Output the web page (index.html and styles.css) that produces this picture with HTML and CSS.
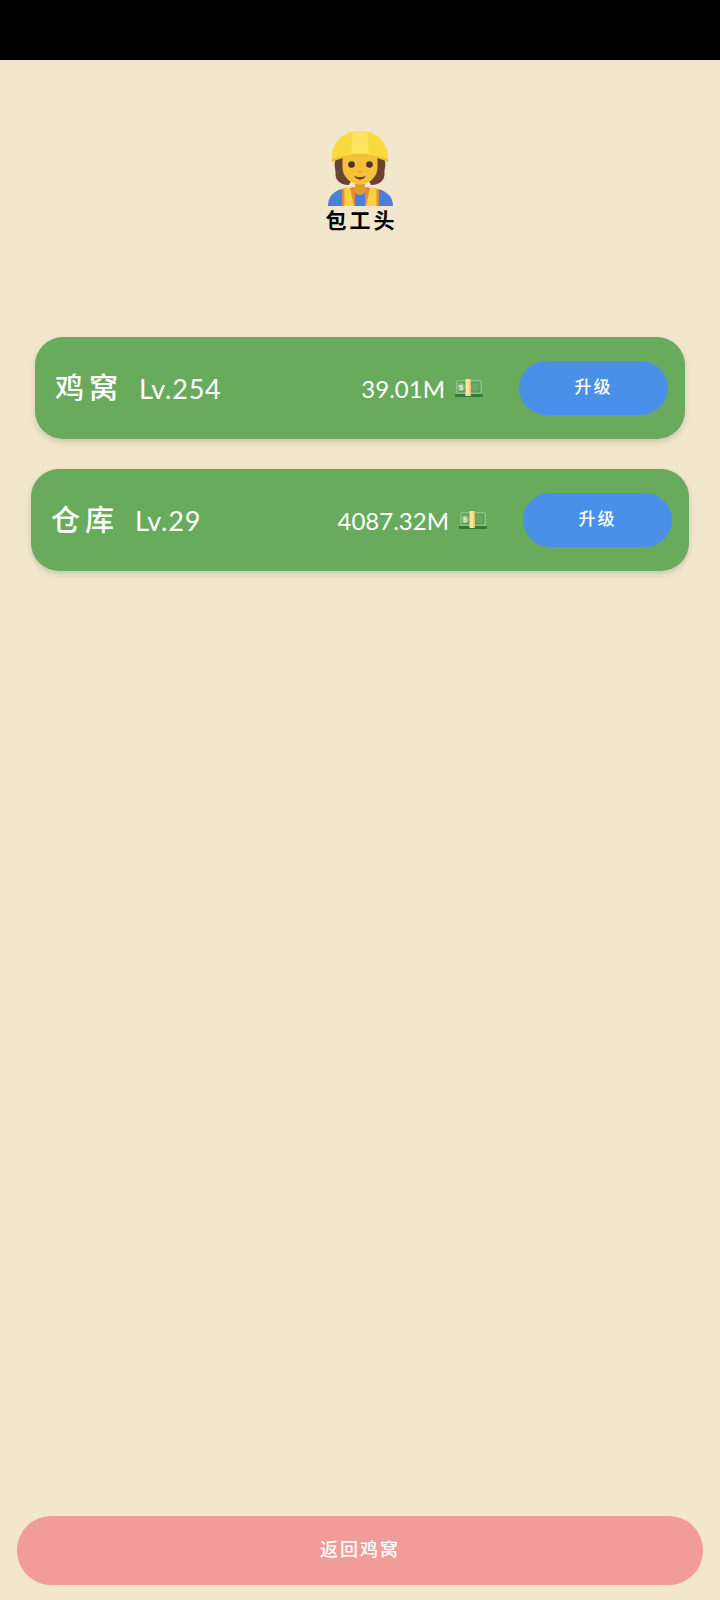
FILE: index.html
```html
<!DOCTYPE html>
<html lang="zh-CN">
<head>
    <meta charset="UTF-8">
    <meta name="viewport" content="width=device-width, initial-scale=1.0">
    <title>包工头</title>
    <link rel="stylesheet" href="styles.css">
</head>
<body>

<div class="status-bar"></div>

<div class="page">
    <div class="boss">
        <!-- 工人头像 -->
        <svg class="boss-icon" viewBox="0 0 72 76" aria-hidden="true">
            <path d="M4 76 C4 65 11 60 22 58 L50 58 C61 60 69 65 69 76 Z" fill="#4a7fdc"/>
            <path d="M12 28 C9 35 12 39 11.500 43 C11 49 15 55 25 55 L30 44 H42 L47 55 C57 55 61 49 60.500 43 C60 39 63 35 60 28 Z" fill="#6b4430"/>
            <path d="M18 76 V59 L29 57 L36 68 L43 57 L55 59 V76 Z" fill="#f7d344"/>
            <path d="M18 76 V59.500 L20.500 59 V76 Z M55 76 V59.500 L52.500 59 V76 Z" fill="#e98a35"/>
            <path d="M26 58 L30 57 L42 57 L46 58 L42 76 H30 Z" fill="#e98a35"/>
            <path d="M31 57 H41 V76 H31 Z" fill="#4a7fdc"/>
            <path d="M31 48 H41 V62 C39 66 33 66 31 62 Z" fill="#e0a02c"/>
            <path d="M18.500 24 H53.500 V37 C53.500 48 44 54.500 36 54.500 C28 54.500 18.500 48 18.500 37 Z" fill="#f6c13a"/>
            <circle cx="27.500" cy="34.500" r="3.300" fill="#4b3426"/>
            <circle cx="45.500" cy="34.500" r="3.300" fill="#4b3426"/>
            <path d="M30 45.500 C33 47.500 39 47.500 42 45.500 C40 51 32 51 30 45.500 Z" fill="#6d3f26"/>
            <path d="M34 41 C35.500 42 36.500 42 38 41" fill="none" stroke="#e39a28" stroke-width="1.400"/>
            <path d="M8 32 C6 12 20 1 36 1 C52 1 66 12 64 32 C50 24 22 24 8 32 Z" fill="#f9d93e"/>
            <path d="M29 2 C31 0.500 41 0.500 43 2 L45 23.500 C40 23 32 23 27 23.500 Z" fill="#fde45f"/>
            <path d="M8 32 C22 24 50 24 64 32 L64 30 C50 22.500 22 22.500 8 30 Z" fill="#e8bd2c"/>
        </svg>
        <div class="boss-name">包工头</div>
    </div>

    <div class="card card-coop">
        <span class="card-name">鸡窝</span>
        <span class="card-level">Lv.254</span>
        <span class="card-cost">39.01M</span>
        <svg class="money-icon" viewBox="0 0 28 18" aria-hidden="true">
            <rect x="0" y="15" width="28" height="3" rx="1" fill="#2f7a35"/>
            <rect x="1" y="1" width="26" height="14" rx="1.500" fill="#8cc084"/>
            <rect x="2.500" y="2.500" width="23" height="11" fill="#5d9e58"/>
            <circle cx="6" cy="8" r="4" fill="#82ba7a"/>
            <text class="money-sign" x="6" y="11">$</text>
            <circle cx="20" cy="8" r="4" fill="#6aa964"/>
            <rect x="10.500" y="0" width="5" height="17" fill="#f8e3a0"/>
            <rect x="14.500" y="0" width="1.500" height="17" fill="#e7bf63"/>
        </svg>
        <button class="btn-upgrade">升级</button>
    </div>

    <div class="card card-store">
        <span class="card-name">仓库</span>
        <span class="card-level">Lv.29</span>
        <span class="card-cost">4087.32M</span>
        <svg class="money-icon" viewBox="0 0 28 18" aria-hidden="true">
            <rect x="0" y="15" width="28" height="3" rx="1" fill="#2f7a35"/>
            <rect x="1" y="1" width="26" height="14" rx="1.500" fill="#8cc084"/>
            <rect x="2.500" y="2.500" width="23" height="11" fill="#5d9e58"/>
            <circle cx="6" cy="8" r="4" fill="#82ba7a"/>
            <text class="money-sign" x="6" y="11">$</text>
            <circle cx="20" cy="8" r="4" fill="#6aa964"/>
            <rect x="10.500" y="0" width="5" height="17" fill="#f8e3a0"/>
            <rect x="14.500" y="0" width="1.500" height="17" fill="#e7bf63"/>
        </svg>
        <button class="btn-upgrade">升级</button>
    </div>

    <button class="btn-back">返回鸡窝</button>
</div>

</body>
</html>
```

FILE: styles.css
```css
* {
    box-sizing: border-box;
}
html, body {
    height: 100%;
}
body {
    margin: 0;
    display: flex;
    flex-direction: column;
    font-family: Lato, "Noto Sans CJK SC", sans-serif;
    background-color: #f2e7cc;
}
.status-bar {
    height: 60px;
    flex-shrink: 0;
    background-color: #000;
}
.page {
    flex: 1;
    display: flex;
    flex-direction: column;
    align-items: center;
    padding: 70px 0 15px;
}
.boss {
    display: flex;
    flex-direction: column;
    align-items: center;
    margin-bottom: 105px;
}
.boss-icon {
    width: 72px;
    height: 76px;
    display: block;
}
.boss-name {
    font-family: "Noto Sans CJK SC", sans-serif;
    font-size: 21px;
    font-weight: 700;
    line-height: 26px;
    letter-spacing: 3px;
    margin-right: -3px;
    color: #000;
}
.card {
    display: flex;
    align-items: center;
    height: 102px;
    border-radius: 28px;
    background-color: #68ab5c;
    box-shadow: 0 3px 6px rgba(0, 0, 0, 0.15);
    color: #fff;
}
.card-coop {
    width: 650px;
    padding: 0 17px 0 20px;
    margin-bottom: 30px;
}
.card-store {
    width: 658px;
    padding: 0 17px 0 20px;
}
.card-name {
    font-family: "Noto Sans CJK SC", sans-serif;
    font-size: 29px;
    font-weight: 500;
    letter-spacing: 5px;
    margin-right: 16px;
    padding-bottom: 5px;
}
.card-level {
    font-size: 27px;
    letter-spacing: 0.8px;
    margin-right: auto;
}
.card-cost {
    font-size: 24px;
    margin-right: 10px;
}
.money-icon {
    width: 28px;
    height: 18px;
    margin-right: 36px;
    flex-shrink: 0;
}
.money-sign {
    font-family: "Liberation Sans", sans-serif;
    font-size: 8px;
    font-weight: 700;
    text-anchor: middle;
    fill: #e8f3da;
}
.btn-upgrade {
    width: 149px;
    height: 54px;
    padding: 0 0 6px;
    border: none;
    border-radius: 27px;
    background-color: #4a90e8;
    color: #fff;
    font-family: "Noto Sans CJK SC", sans-serif;
    font-size: 17px;
    font-weight: 500;
    letter-spacing: 2px;
}
.btn-back {
    width: 686px;
    height: 69px;
    margin-top: auto;
    padding: 0 0 6px;
    border: none;
    border-radius: 34px;
    background-color: #f29c9a;
    color: #fff;
    font-family: "Noto Sans CJK SC", sans-serif;
    font-size: 18px;
    font-weight: 500;
    letter-spacing: 2px;
}
```
